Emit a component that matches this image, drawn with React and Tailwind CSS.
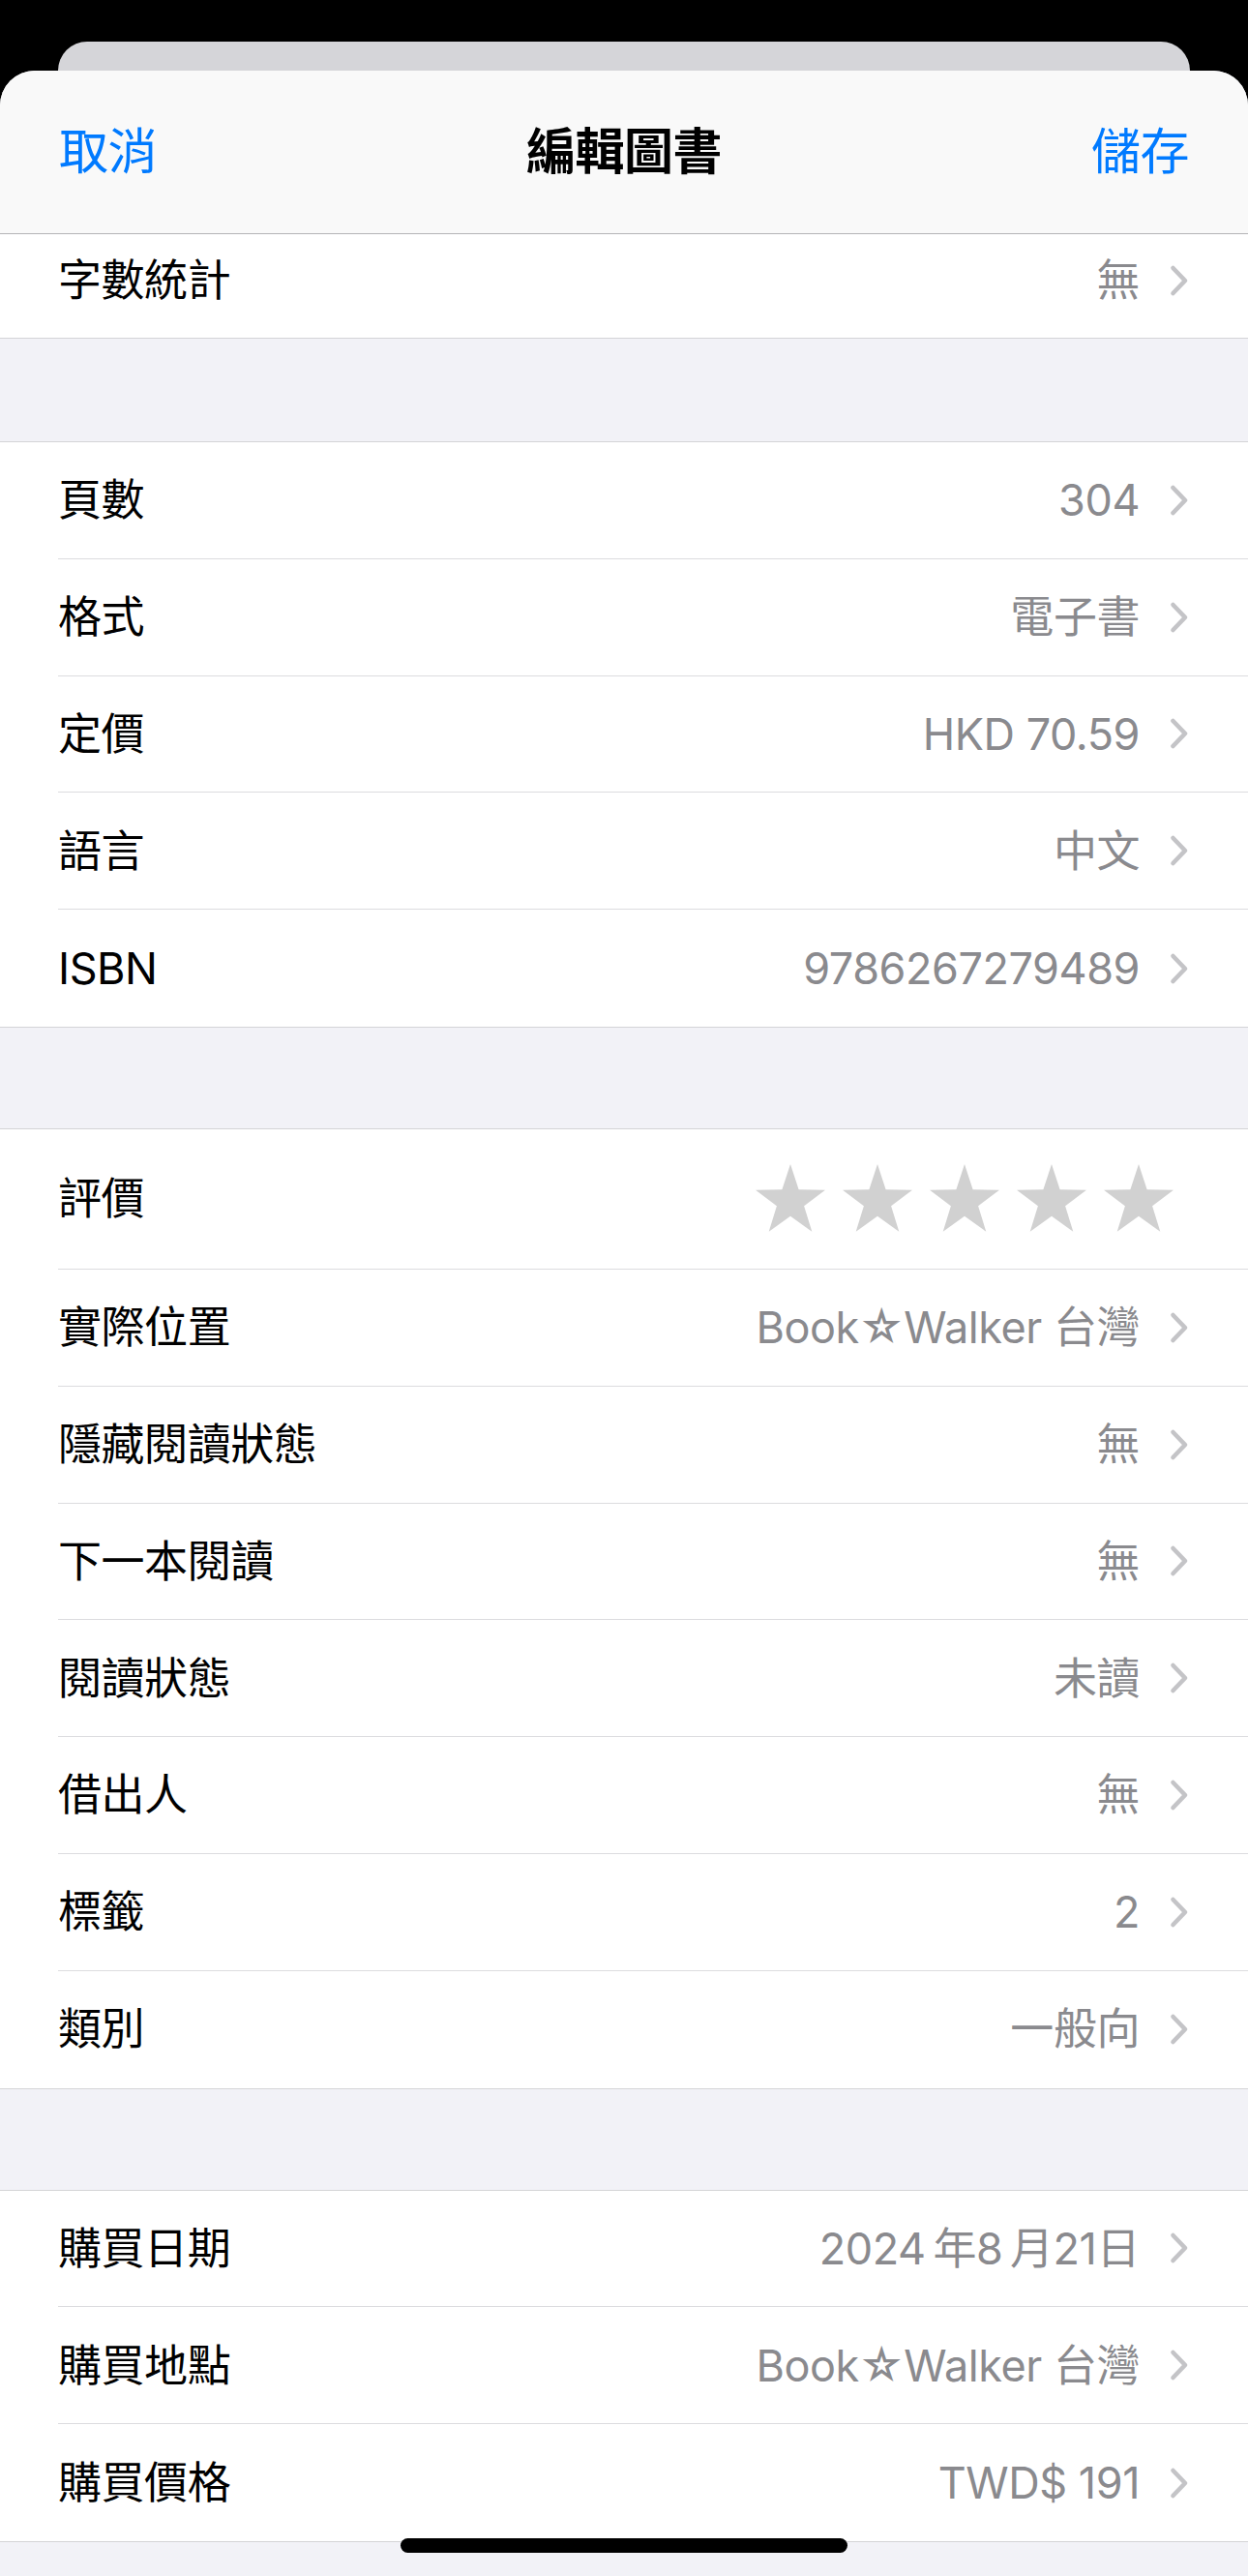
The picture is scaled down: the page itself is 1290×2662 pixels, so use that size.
import React from "react";

function Chevron() {
  return (
    <svg width="22" height="34" viewBox="0 0 22 34" className="shrink-0 ml-[30px]">
      <path d="M4.5 4 L17 17 L4.5 30" fill="none" stroke="#c4c4c7" strokeWidth="4.6" strokeLinecap="round" strokeLinejoin="round" />
    </svg>
  );
}

function Star() {
  return (
    <svg width="72" height="74" viewBox="0 0 72 74" className="shrink-0">
      <polygon
        points="36,1 44.6,27.2 72,27.8 50.1,44.3 58.3,70.8 36,54.8 13.7,70.8 21.9,44.3 0,27.8 27.4,27.2"
        fill="#d1d1d1"
      />
    </svg>
  );
}

function Row({ label, value, last }) {
  return (
    <div className="pl-[60px] bg-white">
      <div className={`h-[120.8px] flex items-center pr-[60px] ${last ? "" : "border-b border-[#dcdcdf]"}`}>
        <span className="text-black">{label}</span>
        <span className="ml-auto text-[#8a8a8e]">{value}</span>
        <Chevron />
      </div>
    </div>
  );
}

function Section({ rows }) {
  return (
    <div className="bg-white border-y border-[#d4d4d7]">
      {rows.map((r, i) => (
        <Row key={r[0]} label={r[0]} value={r[1]} last={i === rows.length - 1} />
      ))}
    </div>
  );
}

export default function App() {
  return (
    <div className="relative w-[1290px] h-[2662px] bg-black overflow-hidden flex flex-col font-['Inter','Noto_Sans_CJK_TC',sans-serif] text-[45px] tracking-[-0.01em]">
      <div className="h-[43px] shrink-0" />
      <div className="mx-[60px] h-[30px] shrink-0 rounded-t-[30px] bg-[#d5d5d9]" />
      <div className="flex-1 flex flex-col rounded-t-[36px] overflow-hidden bg-[#f2f2f7]">
        <div className="h-[169px] shrink-0 bg-[#f9f9f9] border-b border-[#b4b4b6] flex items-center px-[61px] text-[51px]">
          <div className="flex-1 text-[#007aff]">取消</div>
          <div className="font-bold text-black">編輯圖書</div>
          <div className="flex-1 flex justify-end text-[#007aff]">儲存</div>
        </div>

        <div className="bg-white border-b border-[#d4d4d7] pl-[60px]">
          <div className="h-[107px] flex items-center pr-[60px] pb-[12px]">
            <span className="text-black">字數統計</span>
            <span className="ml-auto text-[#8a8a8e]">無</span>
            <Chevron />
          </div>
        </div>

        <div className="h-[106px] shrink-0" />

        <Section
          rows={[
            ["頁數", "304"],
            ["格式", "電子書"],
            ["定價", "HKD 70.59"],
            ["語言", "中文"],
            ["ISBN", "9786267279489"],
          ]}
        />

        <div className="h-[104px] shrink-0" />

        <div className="bg-white border-y border-[#d4d4d7]">
          <div className="pl-[60px]">
            <div className="h-[145px] flex items-center pr-[77px] border-b border-[#dcdcdf]">
              <span className="text-black">評價</span>
              <div className="ml-auto flex gap-[18px]">
                <Star />
                <Star />
                <Star />
                <Star />
                <Star />
              </div>
            </div>
          </div>
          {[
            ["實際位置", "Book☆Walker 台灣"],
            ["隱藏閱讀狀態", "無"],
            ["下一本閱讀", "無"],
            ["閱讀狀態", "未讀"],
            ["借出人", "無"],
            ["標籤", "2"],
            ["類別", "一般向"],
          ].map((r, i, a) => (
            <Row key={r[0]} label={r[0]} value={r[1]} last={i === a.length - 1} />
          ))}
        </div>

        <div className="h-[104px] shrink-0" />

        <Section
          rows={[
            ["購買日期", "2024\u2009年8\u2009月21日"],
            ["購買地點", "Book☆Walker 台灣"],
            ["購買價格", "TWD$ 191"],
          ]}
        />
        <div className="flex-1" />
      </div>
      <div className="absolute bottom-[24px] left-1/2 -translate-x-1/2 w-[462px] h-[15px] rounded-full bg-black" />
    </div>
  );
}
